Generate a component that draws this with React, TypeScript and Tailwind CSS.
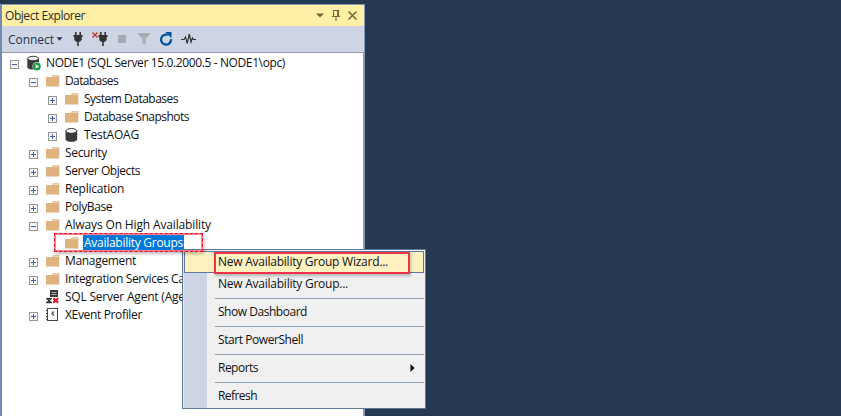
import { useLayoutEffect, useRef, type ReactNode } from "react";

/** Text whose tracking is tuned so that it spans `width` pixels. */
function Label({ width, children, className = "" }: { width: number; children: string; className?: string }) {
  const ref = useRef<HTMLSpanElement>(null);
  useLayoutEffect(() => {
    const el = ref.current;
    if (!el) return;
    el.style.letterSpacing = "0px";
    const natural = el.getBoundingClientRect().width;
    el.style.letterSpacing = `${(width - natural) / children.length}px`;
  }, [width, children]);
  return (
    <span ref={ref} className={`inline-block whitespace-pre ${className}`}>
      {children}
    </span>
  );
}

function Expander({ state }: { state: "open" | "closed" | "none" }) {
  if (state === "none") return <span className="w-[9px] shrink-0" />;
  return (
    <svg className="mt-[3px] shrink-0" width="9" height="9" viewBox="0 0 9 9" shapeRendering="crispEdges">
      <rect x="0.5" y="0.5" width="8" height="8" fill="#f6f6f6" stroke="#969696" />
      <rect x="2" y="4" width="5" height="1" fill="#3d5fa8" />
      {state === "closed" && <rect x="4" y="2" width="1" height="5" fill="#3d5fa8" />}
    </svg>
  );
}

function Folder() {
  return (
    <svg width="16" height="16" viewBox="0 0 16 16">
      <path d="M1 4H7L8 2.3H14.3V13.5H1Z" fill="#e0b27f" />
      <path d="M8.6 3.2H13.4V4H8.2Z" fill="#f5e3cd" />
    </svg>
  );
}

function Cylinder() {
  return (
    <svg width="16" height="16" viewBox="0 0 16 16">
      <path d="M1.5 4V12.3C1.5 15.7 13.2 15.7 13.2 12.3V4Z" fill="#3b3b3b" />
      <ellipse cx="7.35" cy="3.9" rx="5.4" ry="2.4" fill="#f3f3f3" stroke="#3b3b3b" strokeWidth="1" />
    </svg>
  );
}

function ServerIcon() {
  return (
    <svg width="16" height="16" viewBox="0 0 16 16">
      <path d="M1.3 3.6V12C1.3 13.8 4.3 14.6 7.3 14.5L13 9V3.6Z" fill="#3b3b3b" />
      <ellipse cx="7.1" cy="3.5" rx="5.4" ry="2.2" fill="#f3f3f3" stroke="#3b3b3b" strokeWidth="1" />
      <circle cx="10.8" cy="11.4" r="4.3" fill="#fff" />
      <circle cx="10.8" cy="11.4" r="3.9" fill="#169b43" />
      <path d="M9.6 9.2L13.2 11.4L9.6 13.6Z" fill="#fff" />
    </svg>
  );
}

function AgentIcon() {
  return (
    <svg width="16" height="16" viewBox="0 0 16 16">
      <path d="M5 1H13V8H5Z" fill="#3a3a3a" />
      <path d="M6.5 3.5H11.5M6.5 5.5H11.5" stroke="#bdbdbd" strokeWidth="0.9" />
      <path d="M1 9.7H7M1 13.5H7M2.2 10L4 11.6L2.2 13.3M5.8 10L4 11.6L5.8 13.3" fill="none" stroke="#3a3a3a" strokeWidth="1.3" />
      <path d="M8.3 9.2L13.2 13.8M13.2 9.2L8.3 13.8" stroke="#e21b2c" strokeWidth="2.2" />
    </svg>
  );
}

function ProfilerIcon() {
  return (
    <svg width="16" height="16" viewBox="0 0 16 16">
      <rect x="2.5" y="1.5" width="10" height="12" fill="#fafafa" stroke="#424242" />
      <path d="M1 3.5H3M1 6.5H3M1 9.5H3M1 12.5H3" stroke="#424242" />
      <path d="M9.4 4.4H7.6L6 7.5H8.3L7 10.8L9.6 7H7.9Z" fill="#444" />
    </svg>
  );
}

function Plug() {
  return <path d="M2 0H3.6V3H6.4V0H8V3H9.5V5H8.7V8L7 9.7H5.8V14H4.2V9.7H3L1.3 8V5H0.5V3H2Z" fill="#333" />;
}

type Row = {
  text: string;
  width: number;
  level: 0 | 1 | 2;
  state: "open" | "closed" | "none";
  icon: ReactNode;
  selected?: boolean;
};

const rows: Row[] = [
  { text: "NODE1 (SQL Server 15.0.2000.5 - NODE1\\opc)", width: 239, level: 0, state: "open", icon: <ServerIcon /> },
  { text: "Databases", width: 53, level: 1, state: "open", icon: <Folder /> },
  { text: "System Databases", width: 94, level: 2, state: "closed", icon: <Folder /> },
  { text: "Database Snapshots", width: 105, level: 2, state: "closed", icon: <Folder /> },
  { text: "TestAOAG", width: 55, level: 2, state: "closed", icon: <Cylinder /> },
  { text: "Security", width: 42, level: 1, state: "closed", icon: <Folder /> },
  { text: "Server Objects", width: 75, level: 1, state: "closed", icon: <Folder /> },
  { text: "Replication", width: 59, level: 1, state: "closed", icon: <Folder /> },
  { text: "PolyBase", width: 47, level: 1, state: "closed", icon: <Folder /> },
  { text: "Always On High Availability", width: 146, level: 1, state: "open", icon: <Folder /> },
  { text: "Availability Groups", width: 99, level: 2, state: "none", icon: <Folder />, selected: true },
  { text: "Management", width: 71, level: 1, state: "closed", icon: <Folder /> },
  { text: "Integration Services Catalogs", width: 151, level: 1, state: "closed", icon: <Folder /> },
  { text: "SQL Server Agent (Agent XPs disabled)", width: 205, level: 1, state: "none", icon: <AgentIcon /> },
  { text: "XEvent Profiler", width: 77, level: 1, state: "closed", icon: <ProfilerIcon /> },
];

const indents = ["pl-[8px]", "pl-[27px]", "pl-[46px]"];

function TreeRow({ row }: { row: Row }) {
  return (
    <div className={`flex h-[18px] items-center ${indents[row.level]}`}>
      <Expander state={row.state} />
      <span className="ml-[7px] w-4 shrink-0">{row.icon}</span>
      <span
        className={`ml-[3px] flex h-[16px] items-center px-[1px] ${
          row.selected ? "bg-[#0078d7] text-white outline-1 -outline-offset-1 outline-dotted outline-[#8a6a3a]" : ""
        }`}
      >
        <Label width={row.width}>{row.text}</Label>
      </span>
    </div>
  );
}

function Separator() {
  return (
    <div className="flex h-[6px] items-center pl-[31px]">
      <div className="h-px w-full bg-[#8b9fb2]" />
    </div>
  );
}

function MenuItem({ text, width, active, arrow }: { text: string; width: number; active?: boolean; arrow?: boolean }) {
  return (
    <div
      className={`flex h-[22px] items-center justify-between border pr-[8px] pl-[33px] ${
        active ? "border-[#63779a] bg-[#fff2c0]" : "border-transparent"
      }`}
    >
      <Label width={width}>{text}</Label>
      {arrow && (
        <svg width="5" height="8" viewBox="0 0 5 8">
          <path d="M0.5 0L4.5 4L0.5 8Z" fill="#000" />
        </svg>
      )}
    </div>
  );
}

function ContextMenu() {
  return (
    <div className="absolute top-[249px] left-[182px] h-[160px] w-[244px] border border-[#5f7899] bg-[linear-gradient(90deg,#e5eaf2_1px,#cdd5e4_1px,#cdd5e4_24px,#f0f0f0_24px)] p-px">
      <MenuItem text="New Availability Group Wizard..." width={170} active />
      <MenuItem text="New Availability Group..." width={130} />
      <Separator />
      <MenuItem text="Show Dashboard" width={89} />
      <Separator />
      <MenuItem text="Start PowerShell" width={85} />
      <Separator />
      <MenuItem text="Reports" width={40} arrow />
      <Separator />
      <MenuItem text="Refresh" width={39} />
    </div>
  );
}

function TitleBar() {
  return (
    <div className="flex h-[21px] items-center bg-[#fff0a6] pr-[5px] pl-[3px] text-[#2c2a22]">
      <Label width={80} className="pt-px">Object Explorer</Label>
      <svg className="ml-auto" width="44" height="13" viewBox="0 0 44 13" fill="none" stroke="#75633d">
        <path d="M1 4.5H9L5 8.5Z" fill="#75633d" stroke="none" />
        <path d="M18.5 1.5H23.5V7.5M18.5 1.5V7.5M17 7.5H25M21 8V12" strokeWidth="1.1" />
        <path d="M22.7 1.5V7.5" strokeWidth="1.2" />
        <path d="M33.5 2.5L41.5 10.5M41.5 2.5L33.5 10.5" strokeWidth="1.5" />
      </svg>
    </div>
  );
}

function Toolbar() {
  return (
    <div className="flex h-[26px] items-center bg-[#cdd5e4] pl-[6px] text-[#24334f]">
      <Label width={46} className="pt-px">Connect</Label>
      <svg className="ml-[2px]" width="7" height="4" viewBox="0 0 7 4">
        <path d="M0.5 0.3H6.5L3.5 3.7Z" fill="#24334f" />
      </svg>
      <svg className="ml-[10px]" width="10" height="14" viewBox="0 0 10 14">
        <Plug />
      </svg>
      <svg className="ml-[9px]" width="16" height="14" viewBox="0 0 16 14">
        <path d="M0.5 0.5L5.5 5.5M5.5 0.5L0.5 5.5" stroke="#c0392b" strokeWidth="1.4" />
        <g transform="translate(6 0)">
          <Plug />
        </g>
      </svg>
      <span className="ml-[10px] h-2 w-2 bg-[#a8abb2]" />
      <svg className="ml-[12px]" width="12" height="12" viewBox="0 0 12 12">
        <path d="M0 0H12V1L7.5 6V12L4.5 10V6L0 1Z" fill="#a8abb2" />
      </svg>
      <svg className="ml-[9px]" width="14" height="14" viewBox="0 0 14 14">
        <path d="M11.6 5.4A5 5 0 1 1 7 2.5" fill="none" stroke="#00539c" strokeWidth="2.3" transform="rotate(20 6.8 7.5)" />
        <path d="M6.3 0H12.5V6.2Z" fill="#00539c" />
      </svg>
      <svg className="ml-[8px]" width="15" height="12" viewBox="0 0 15 12">
        <path d="M0 6.5H3L4.5 4L6.3 10.5L8.2 1L10 9L11.4 5L12.3 6.5H15" fill="none" stroke="#333" strokeWidth="1.2" />
      </svg>
    </div>
  );
}

export default function App() {
  return (
    <div className="relative h-[416px] w-[841px] overflow-hidden bg-[#253951] pt-[4px] font-['Open_Sans','Noto_Sans',sans-serif] text-[12px] leading-[16px] text-[#111]">
      <div className="h-full w-[365px] border-t border-r border-l-2 border-t-[#8798b6] border-r-[#8798b6] border-l-[#7689ae]">
        <TitleBar />
        <Toolbar />
        <div className="h-full border-t border-r border-[#919aaa] bg-white pt-px">
          {rows.map((row) => (
            <TreeRow key={row.text} row={row} />
          ))}
        </div>
      </div>
      <ContextMenu />
      <div className="absolute top-[233px] left-[54px] h-[19px] w-[149px] border-2 border-[#f8808e] shadow-[1px_2px_3px_rgba(0,0,0,0.25)] outline-1 -outline-offset-1 outline-dashed outline-[#e8102c]" />
      <div className="absolute top-[252px] left-[214px] h-[22px] w-[196px] border-2 border-[#ee3348] shadow-[1px_2px_3px_rgba(0,0,0,0.25)]" />
    </div>
  );
}
